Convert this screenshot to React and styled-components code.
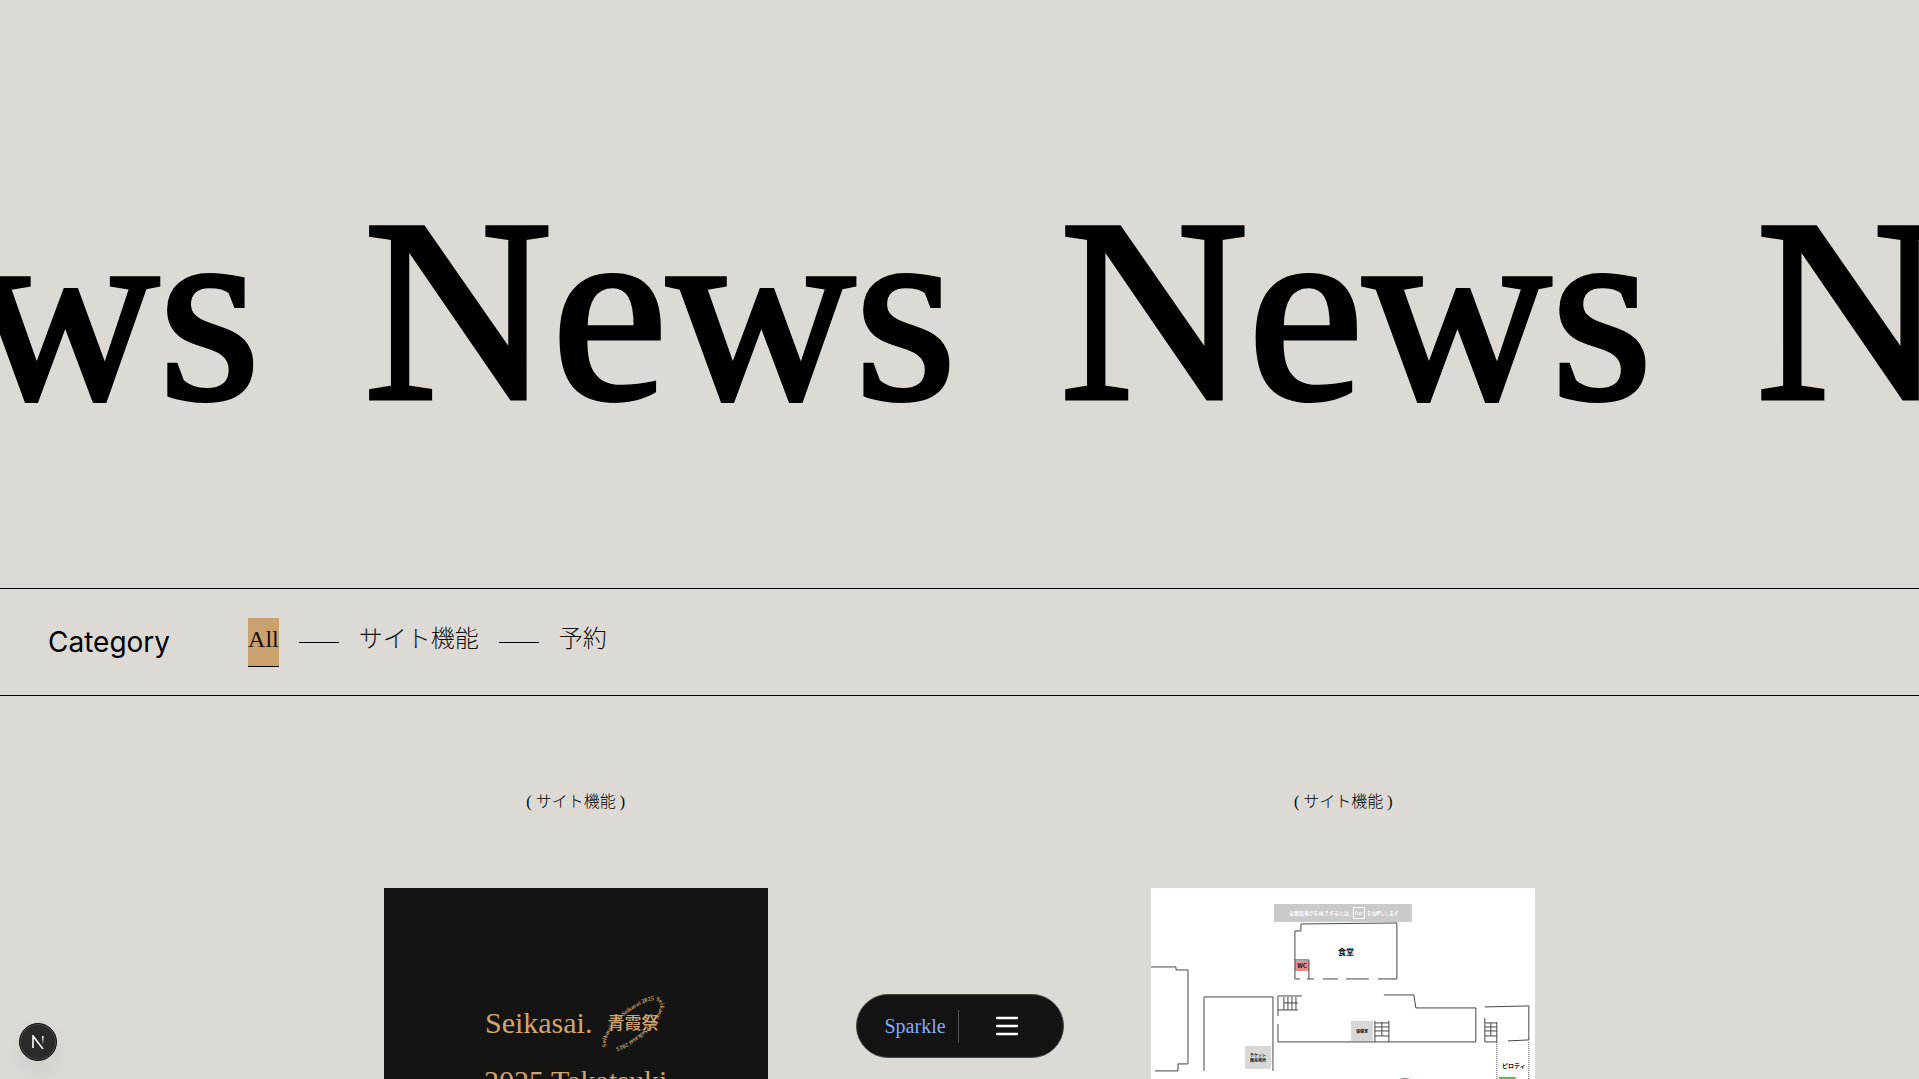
import React from "react";
import styled, { createGlobalStyle } from "styled-components";

const serif = `"Liberation Serif", "Noto Sans CJK JP", serif`;
const cjk = `"Noto Sans CJK JP", sans-serif`;

const GlobalStyle = createGlobalStyle`
  * { box-sizing: border-box; }
  html, body { margin: 0; height: 100%; overflow: hidden; background: #dddad5; color: #000; font-family: ${serif}; }
`;

const Hero = styled.header`
  display: flex;
  overflow: hidden;
  padding: 163px 0 131px;
`;
const Title = styled.h1`
  display: flex;
  flex: none;
  gap: 104px;
  margin: 0 0 0 -332px;
  font-size: 260px;
  line-height: 294px;
  font-weight: 400;
  -webkit-text-stroke: 5px #000;
`;

const CategoryBar = styled.nav`
  display: flex;
  align-items: center;
  gap: 78px;
  height: 108px;
  padding: 0 48px;
  border-top: 1px solid #000;
  border-bottom: 1px solid #000;
`;
const CategoryTitle = styled.h2`
  margin: 0;
  font: 400 28px/36px Inter, sans-serif;
`;
const CategoryList = styled.ul`
  display: flex;
  align-items: center;
  gap: 20px;
  margin: 0;
  padding: 0;
  list-style: none;
`;
const CategoryItem = styled.li`
  display: flex;
  align-items: center;
  gap: 20px;
  & + &::before {
    content: "";
    width: 40px;
    height: 1px;
    background: #000;
  }
`;
const CategoryLink = styled.a`
  display: block;
  padding-bottom: 6px;
  border-bottom: 1px solid ${(p) => (p.$active ? "#000" : "transparent")};
  background: ${(p) => (p.$active ? "#cba26f" : "transparent")};
  color: #111;
  font-size: 24px;
  font-weight: 300;
  line-height: 42px;
  text-decoration: none;
`;

const Articles = styled.main`
  display: grid;
  grid-template-columns: 1fr 1fr;
  column-gap: 20vw;
  padding: 94px 20vw 0;
`;
const Article = styled.article`
  display: flex;
  flex-direction: column;
  gap: 74px;
`;
const Tag = styled.p`
  margin: 0;
  text-align: center;
  font-size: 16px;
  font-weight: 300;
  line-height: 24px;
`;
const Poster = styled.div`
  height: 384px;
  padding-top: 105px;
  background: #141414;
  color: #d0a56f;
  font-size: 30px;
  line-height: 40px;
  display: flex;
  flex-direction: column;
  align-items: center;
  gap: 8px;
`;
const PosterLine = styled.div`
  display: flex;
  align-items: center;
  gap: 8px;
`;
const MapArt = styled.svg`
  display: block;
  width: 100%;
  background: #fff;
`;

const Dock = styled.div`
  position: fixed;
  left: 50%;
  bottom: 21px;
  transform: translateX(-50%);
  display: flex;
  align-items: center;
  width: 208px;
  height: 64px;
  padding: 0 28px;
  gap: 12px;
  border: 1px solid #444;
  border-radius: 32px;
  background: #141414;
`;
const DockLink = styled.a`
  color: #86abf5;
  font-size: 20px;
  line-height: 28px;
  text-decoration: none;
`;
const MenuButton = styled.button`
  display: flex;
  flex: 1;
  height: 33px;
  align-items: center;
  justify-content: flex-end;
  padding: 0 17px;
  border: 0;
  border-left: 1px solid #555;
  background: none;
`;
const DevButton = styled.button`
  position: fixed;
  left: 19px;
  bottom: 18px;
  display: grid;
  place-items: center;
  width: 38px;
  height: 38px;
  padding: 0;
  border: 1px solid #111;
  border-radius: 50%;
  background: #2a2a2a;
  box-shadow: inset 0 0 0 1px #4a4a4a, 0 12px 24px rgba(0, 0, 0, 0.06);
`;

const categories = ["All", "サイト機能", "予約"];

function Emblem() {
  return (
    <svg width="66" height="60" viewBox="0 0 66 60" fill="#d0a56f">
      <defs>
        <path id="ring" d="M7 53 A34 12 -40 0 1 59 9 A34 12 -40 0 1 7 53Z" />
      </defs>
      <text fontSize="6" fontWeight="700" fontFamily="Liberation Serif, serif">
        <textPath href="#ring">Seikasai 2025 Seikasai 2025 Seikasai 2025 Seikasai 2025</textPath>
      </text>
      <text x="33" y="36" textAnchor="middle" fontSize="17" fontWeight="500" fontFamily={cjk}>青霞祭</text>
    </svg>
  );
}

function FloorMap() {
  return (
    <MapArt viewBox="0 0 384 384" role="img" aria-label="校内マップ">
      <rect x="123" y="16" width="138" height="18" fill="#c9cacb" />
      <g fill="#fff" fontFamily={cjk} fontSize="5" fontWeight="500">
        <text x="138" y="27">全画面表示を終了するには、</text>
        <text x="204" y="27">Esc</text>
        <text x="216" y="27" fontSize="4.500">を長押しします</text>
      </g>
      <rect x="202.500" y="19.500" width="11" height="11" fill="none" stroke="#fff" />
      <rect x="144" y="73" width="14" height="10" fill="#f48787" />
      <rect x="200" y="133" width="22" height="20" fill="#d8d8d8" />
      <rect x="94" y="158" width="26" height="23" fill="#d8d8d8" />
      <rect x="348" y="189" width="17" height="20" fill="#62bd4c" />
      <circle cx="254" cy="203" r="13" fill="#8b7670" />
      <g fill="none" stroke="#444" strokeWidth="1">
        <path d="M0 79H25V82H37V176H27V183H4" />
        <path d="M53 183V109H122V183" />
        <path d="M149 91H144V43H150V36L246 35V91H227M144 72H158V91H163M156 91H158M172 91H187M195 91H218" />
        <path d="M151 108H127V128M127 136V154H325V120H265L263 107H233M127 122H147" />
        <path d="M133 109V122M137 109V122M141 109V122M145 109V122M133 115H147" />
        <path d="M224 133V154M238 133V154M231 134V148M224 135H238M224 139H238M224 143H238M224 148H238" />
        <path d="M334 119L378 118V152L357 153M334 130V154H346V134M340 135V148M334 135H346M334 139H346M334 143H346M334 148H346" />
        <path d="M346 154V200M378 154V200" strokeDasharray="1 1" />
      </g>
      <g fill="#111" fontFamily={cjk} fontWeight="700" textAnchor="middle">
        <text x="195" y="67" fontSize="8">食堂</text>
        <text x="151" y="80" fontSize="6">WC</text>
        <text x="211" y="145" fontSize="4">保健室</text>
        <text x="107" y="169" fontSize="4">チケット</text>
        <text x="107" y="174" fontSize="4">販売場所</text>
        <text x="363" y="180" fontSize="6">ピロティ</text>
      </g>
    </MapArt>
  );
}

export default function App() {
  return (
    <>
      <GlobalStyle />
      <Hero>
        <Title aria-label="News">
          {[0, 1, 2, 3].map((i) => <span key={i}>News</span>)}
        </Title>
      </Hero>
      <CategoryBar>
        <CategoryTitle>Category</CategoryTitle>
        <CategoryList>
          {categories.map((name, i) => (
            <CategoryItem key={name}>
              <CategoryLink href="#" $active={i === 0}>{name}</CategoryLink>
            </CategoryItem>
          ))}
        </CategoryList>
      </CategoryBar>
      <Articles>
        <Article>
          <Tag>( サイト機能 )</Tag>
          <Poster>
            <PosterLine>Seikasai.<Emblem /></PosterLine>
            <PosterLine>2025 Takatsuki</PosterLine>
          </Poster>
        </Article>
        <Article>
          <Tag>( サイト機能 )</Tag>
          <FloorMap />
        </Article>
      </Articles>
      <Dock>
        <DockLink href="#">Sparkle</DockLink>
        <MenuButton aria-label="Menu">
          <svg width="22" height="20" viewBox="0 0 22 20" stroke="#fff" strokeWidth="2.500" strokeLinecap="round">
            <path d="M1 2H21M1 10H21M1 18H21" />
          </svg>
        </MenuButton>
      </Dock>
      <DevButton aria-label="Developer tools">
        <svg width="12" height="14" viewBox="0 0 12 14" fill="none" stroke="#fff" strokeWidth="1.600">
          <defs>
            <linearGradient id="fade" x1="0" y1="0" x2="0" y2="1">
              <stop offset="0" stopColor="#fff" />
              <stop offset="1" stopColor="#fff" stopOpacity="0" />
            </linearGradient>
          </defs>
          <path d="M1 13V1L11 14" />
          <rect x="10" y="1" width="1.600" height="9" fill="url(#fade)" stroke="none" />
        </svg>
      </DevButton>
    </>
  );
}
